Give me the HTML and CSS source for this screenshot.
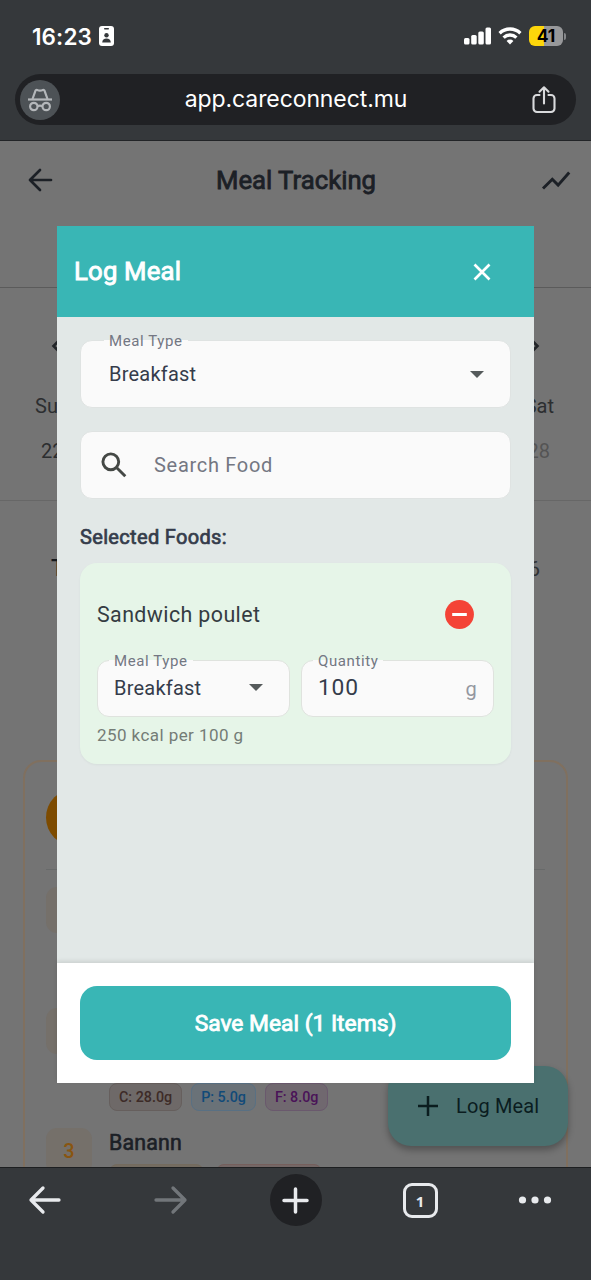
FILE: index.html
```html
<!DOCTYPE html>
<html lang="en">
<head>
<meta charset="utf-8">
<title>Meal Tracking</title>
<link rel="stylesheet" href="styles.css">
</head>
<body>
<div class="phone">
  <header class="browser-top">
    <div class="status">
      <span class="clock">16:23</span>
      <svg class="badge-icon" width="15" height="20" viewBox="0 0 15 20"><rect width="15" height="20" rx="3" fill="#fff"/><rect x="5" y="2" width="5" height="1.4" rx=".7" fill="#35383b"/><circle cx="7.5" cy="9.3" r="2.2" fill="#35383b"/><path d="M3.2 16.4c0-2.6 1.9-4 4.3-4s4.300 1.400 4.300 4z" fill="#35383b"/></svg>
      <span class="spacer"></span>
      <svg class="signal" width="28" height="18" viewBox="0 0 28 18" fill="#fff"><rect x="0" y="11" width="5.500" height="6.500" rx="1.500"/><rect x="7.200" y="8" width="5.500" height="9.500" rx="1.500"/><rect x="14.300" y="4.500" width="5.500" height="13" rx="1.500"/><rect x="21.500" y="0.500" width="5.500" height="17" rx="1.500"/></svg>
      <svg class="wifi" width="24" height="18" viewBox="0 0 24 18" fill="none" stroke="#fff" stroke-width="3.300"><path d="M1.600 6.200a15 15 0 0 1 20.800 0"/><path d="M5.600 10.600a9.200 9.200 0 0 1 12.800 0"/><path d="M12 17.500l-3.400-3.500a4.800 4.800 0 0 1 6.800 0z" fill="#fff" stroke="none"/></svg>
      <span class="battery">41</span><span class="battery-tip"></span>
    </div>
    <div class="url-bar">
      <span class="incognito"><svg width="26" height="24" viewBox="0 0 26 24" fill="none" stroke="#b4b7ba" stroke-width="2.200"><path d="M1 11.500h24"/><path d="M5.500 11l3-8.300c.3-.8 1-1 1.700-.7 1.800.8 3.800.8 5.600 0 .7-.3 1.400-.1 1.700.7l3 8.300"/><circle cx="6.800" cy="18.500" r="3.700"/><circle cx="19.200" cy="18.500" r="3.700"/><path d="M10.500 18.300q2.500-1.200 5 0"/></svg></span>
      <span class="url">app.careconnect.mu</span>
      <svg class="share" width="24" height="28" viewBox="0 0 24 28" fill="none" stroke="#d9dadc" stroke-width="2.100" stroke-linecap="round" stroke-linejoin="round"><path d="M7.500 9H5a3.500 3.500 0 0 0-3.500 3.500v10A3.500 3.500 0 0 0 5 26h14a3.500 3.500 0 0 0 3.500-3.500v-10A3.500 3.500 0 0 0 19 9h-2.500"/><path d="M12 17.500V1.500M7.500 5.700L12 1.300l4.500 4.400"/></svg>
    </div>
  </header>

  <main class="page">
    <div class="app-bar">
      <svg width="26" height="26" viewBox="0 0 26 26" fill="none" stroke="#1c2026" stroke-width="2.700" stroke-linecap="round" stroke-linejoin="round"><path d="M24 13H3M13 3L3 13l10 10"/></svg>
      <h1>Meal Tracking</h1>
      <svg width="30" height="20" viewBox="0 0 30 20" fill="none" stroke="#1c2026" stroke-width="2.900"><path d="M2 17.500L11.300 8.300l5.800 5.800L28.200 1.500"/></svg>
    </div>
    <div class="week">
      <div class="week-nav">
        <svg width="10" height="14" viewBox="0 0 10 14" fill="none" stroke="#222529" stroke-width="2.600"><path d="M8 1.500L2.500 7 8 12.500"/></svg>
        <svg width="10" height="14" viewBox="0 0 10 14" fill="none" stroke="#222529" stroke-width="2.600"><path d="M2 1.500L7.500 7 2 12.500"/></svg>
      </div>
      <div class="week-row"><span>Sun</span><span>Sat</span></div>
      <div class="week-row dates"><span>22</span><span class="muted">28</span></div>
    </div>
    <div class="day"><b>Today</b><span>2026</span></div>
    <section class="meals">
      <div class="meals-head"><span class="meal-dot"></span></div>
      <div class="item"><span class="num"></span></div>
      <div class="item"><span class="num"></span>
        <div class="chips"><span class="chip carb">C: 28.0g</span><span class="chip prot">P: 5.0g</span><span class="chip fat">F: 8.0g</span></div>
      </div>
      <div class="item"><span class="num">3</span>
        <div class="food"><h3>Banann</h3><div class="chips slim"><span class="chip kcal"></span><span class="chip sugar"></span></div></div>
      </div>
    </section>
    <div class="fab"><svg width="20" height="20" viewBox="0 0 20 20" stroke="#0b1d1f" stroke-width="2.500"><path d="M10 0v20M0 10h20"/></svg><span>Log Meal</span></div>
  </main>

  <nav class="browser-nav">
    <svg width="34" height="28" viewBox="0 0 34 28" fill="none" stroke="#e8eaed" stroke-width="3.300" stroke-linecap="round" stroke-linejoin="round"><path d="M31 14H3M15 2L3 14l12 12"/></svg>
    <svg width="34" height="28" viewBox="0 0 34 28" fill="none" stroke="#72767a" stroke-width="3.300" stroke-linecap="round" stroke-linejoin="round"><path d="M2 14h29M19 2l12 12-12 12"/></svg>
    <span class="new-tab"><svg width="27" height="27" viewBox="0 0 27 27" stroke="#e8eaed" stroke-width="3.500" stroke-linecap="round"><path d="M13.500 2v23M2 13.500h23"/></svg></span>
    <span class="tabs">1</span>
    <svg width="34" height="8" viewBox="0 0 34 8" fill="#e8eaed"><circle cx="4.500" cy="4" r="3.600"/><circle cx="17" cy="4" r="3.600"/><circle cx="29.500" cy="4" r="3.600"/></svg>
  </nav>

  <div class="dialog">
    <div class="dialog-head"><h2>Log Meal</h2><svg width="18" height="18" viewBox="0 0 18 18" stroke="#fff" stroke-width="2.700"><path d="M1.500 1.500l15 15M16.500 1.500l-15 15"/></svg></div>
    <div class="dialog-body">
      <div class="field select"><label>Meal Type</label><span class="value">Breakfast</span><i class="caret"></i></div>
      <div class="field search"><svg width="26" height="26" viewBox="0 0 26 26" fill="none" stroke="#444845" stroke-width="2.900"><circle cx="9.800" cy="9.800" r="7.900"/><path d="M16 16l8.300 8.300"/></svg><span class="placeholder">Search Food</span></div>
      <h4>Selected Foods:</h4>
      <div class="food-card">
        <div class="food-title"><span>Sandwich poulet</span><svg width="29" height="29" viewBox="0 0 29 29"><circle cx="14.500" cy="14.500" r="14.400" fill="#f44336"/><rect x="7.200" y="13" width="14.600" height="3" fill="#fff"/></svg></div>
        <div class="food-fields">
          <div class="field mini select"><label>Meal Type</label><span class="value">Breakfast</span><i class="caret"></i></div>
          <div class="field mini"><label>Quantity</label><span class="amount">100</span><span class="unit">g</span></div>
        </div>
        <div class="note">250 kcal per 100 g</div>
      </div>
    </div>
    <div class="dialog-foot"><button class="save">Save Meal (1 Items)</button></div>
  </div>
</div>
</body>
</html>
```

FILE: styles.css
```css
* { box-sizing: border-box; }
body { margin: 0; font-family: Roboto, "Liberation Sans", sans-serif; }
svg { display: block; flex: none; overflow: visible; }
h1, h2, h3, h4 { margin: 0; font-weight: 400; }

.phone { position: relative; width: 591px; height: 1280px; display: flex; flex-direction: column; overflow: hidden; background: #35383b; }

.browser-top { height: 141px; flex: none; padding: 21px 15px 0 15px; border-bottom: 1px solid #222427; color: #fff; font-family: Inter, sans-serif; }
.status { height: 30px; display: flex; align-items: center; padding: 0 10px 0 17px; }
.clock { font-size: 22.500px; font-weight: 600; letter-spacing: .1px; width: 67px; }
.spacer { flex: 1; }
.wifi { margin: 0 7px 0 6px; }
.battery { width: 34px; height: 20px; border-radius: 6px; background: linear-gradient(90deg, #fdd60b 43%, #97989a 43%); color: #000; font-size: 17.500px; font-weight: 700; line-height: 20px; text-align: center; }
.battery-tip { width: 2px; height: 7px; margin-left: 1px; border-radius: 0 2px 2px 0; background: #85878a; }
.url-bar { margin-top: 23px; height: 51px; border-radius: 26px; background: #202124; display: flex; align-items: center; padding: 0 20px 0 5px; }
.incognito { width: 40px; height: 40px; border-radius: 50%; background: #4d5256; display: flex; align-items: center; justify-content: center; }
.url { flex: 1; text-align: center; font-size: 23px; letter-spacing: -.1px; line-height: 28px; margin-top: -2px; }

.page { position: relative; height: 1027px; flex: none; overflow: hidden; background: #747474; border-bottom: 1px solid #1d1f21; }
.app-bar { height: 147px; display: flex; justify-content: space-between; align-items: flex-start; padding: 26px 20px 0 27px; border-bottom: 1px solid #5b5b5b; color: #1c2026; }
.app-bar svg:last-child { margin-top: 4px; }
.app-bar h1 { font-size: 25.700px; line-height: 30px; margin: -2px 2px 0 0; -webkit-text-stroke: .8px; }
.week { height: 213px; border-bottom: 1px solid #676767; color: #2c2e30; font-size: 20px; }
.week-nav { height: 94px; padding: 51px 51px 0; display: flex; justify-content: space-between; align-items: flex-start; }
.week-row { height: 46px; padding: 0 37px 0 35px; display: flex; justify-content: space-between; line-height: 48px; }
.dates { padding: 0 41px; line-height: 47px; }
.muted { color: #545454; }
.day { display: flex; justify-content: space-between; height: 259px; padding: 55px 51px 0; font-size: 21px; line-height: 26px; color: #15191e; }
.day b { font-weight: 500; font-size: 23px; }
.day span { color: #303234; }

.meals { width: 545px; height: 500px; margin-left: 23px; border: 2px solid #80705f; border-radius: 18px; padding: 27px 21px 0; }
.meals-head { height: 81px; border-bottom: 1px solid #686a6a; }
.meal-dot { display: block; width: 57px; height: 57px; border-radius: 50%; background: #7d4b00; }
.item { height: 120.500px; padding-top: 17px; display: flex; gap: 17px; }
.num { width: 46px; height: 46px; border-radius: 11px; background: #75706a; color: #895510; font-size: 20px; font-weight: 500; line-height: 46px; text-align: center; }
.item .chips { display: flex; gap: 9px; padding-top: 75px; }
.chip { height: 28px; border: 1px solid; border-radius: 8px; padding: 0 9px; font-size: 14.300px; font-weight: 500; line-height: 27px; }
.carb { color: #3d2b27; border-color: #665f5d; background: #6e6968; }
.prot { color: #114a78; border-color: #597083; background: #6a7278; }
.fat { color: #4a1358; border-color: #6a596d; background: #70686f; }
.food h3 { font-size: 21.400px; line-height: 29px; letter-spacing: .15px; color: #1c2026; -webkit-text-stroke: .6px; }
.item .slim { gap: 12px; padding-top: 7px; }
.kcal { width: 95px; color: #746b5e; background: #746c61; }
.sugar { width: 106px; color: #755f5c; background: #746766; }
.fab { position: absolute; left: 388px; top: 925px; width: 180px; height: 80px; border-radius: 23px; background: #4a706f; box-shadow: 0 4px 7px rgba(0,0,0,.3); display: flex; align-items: center; padding: 0 0 0 30px; gap: 18px; color: #0b1d1f; font-size: 20px; letter-spacing: .15px; }

.browser-nav { display: grid; grid-template: 52px / 126px 115.500px 133px 115.500px 34px; padding: 6px 0 0 28px; align-items: center; justify-items: start; align-content: start; }
.new-tab { width: 52px; height: 52px; border-radius: 50%; background: #202124; display: grid; place-items: center; }
.tabs { width: 35px; height: 35px; border: 3px solid #e8eaed; border-radius: 9px; color: #e8eaed; font: 700 15px/30px "Open Sans", sans-serif; text-align: center; }

.dialog { position: absolute; left: 57px; top: 226px; width: 477px; height: 857px; display: flex; flex-direction: column; background: #e2e8e7; }
.dialog-head { height: 91px; flex: none; background: #39b6b5; color: #fff; display: flex; align-items: center; justify-content: space-between; padding: 0 43px 0 17px; }
.dialog-head h2 { font-size: 25.700px; line-height: 30px; margin-top: -2px; letter-spacing: .2px; -webkit-text-stroke: .9px; }
.dialog-body { flex: 1; padding: 23px; }
.field { position: relative; height: 68px; border: 1px solid #dfe3e2; border-radius: 12px; background: #fafafa; display: flex; align-items: center; padding: 0 26px 0 28px; color: #353c4b; font-size: 20px; letter-spacing: .22px; }
.field label { position: absolute; left: 23px; top: -10px; padding: 0 5px; font-size: 15px; line-height: 20px; letter-spacing: .6px; color: #737783; background: linear-gradient(transparent 0 9px, #fafafa 9px 12px, transparent 12px); }
.field .caret { margin-left: auto; border: 7px solid transparent; border-top-color: #555a5b; border-bottom: 0; }
.field.search { margin-top: 23px; padding-left: 20px; }
.placeholder { margin-left: 27px; color: #747782; letter-spacing: .7px; }
.dialog-body h4 { margin: 24px 0 11px; line-height: 29px; font-size: 20px; letter-spacing: .33px; color: #353c4b; -webkit-text-stroke: .7px; }
.food-card { height: 201px; border-radius: 17px; background: #e6f5e8; padding: 17px; box-shadow: 0 1px 2px rgba(90,110,100,.08); }
.food-title { height: 69px; display: flex; align-items: center; justify-content: space-between; padding: 0 20px 0 0; color: #353c42; font-size: 21.400px; letter-spacing: .4px; }
.food-fields { display: flex; gap: 11px; margin-top: 11px; }
.mini { width: 193px; height: 57px; padding: 0 16px 2px; border: 1px solid #dfe3de; }
.mini label { left: 11px; }
.mini.select { padding-right: 26px; }
.amount { font-size: 22.800px; letter-spacing: .8px; }
.unit { margin: 3px 0 0 auto; color: #9497a0; }
.note { margin-top: 7px; line-height: 22px; font-size: 17px; letter-spacing: .43px; color: #747c76; }
.dialog-foot { height: 120px; flex: none; padding: 23px; background: #fff; box-shadow: 0 -2px 4px rgba(0,0,0,.1); }
.save { display: block; width: 100%; height: 74px; border: 0; padding: 0; border-radius: 17px; background: #39b6b5; color: #fff; font: 400 22.800px Roboto, sans-serif; -webkit-text-stroke: .8px; }
```
